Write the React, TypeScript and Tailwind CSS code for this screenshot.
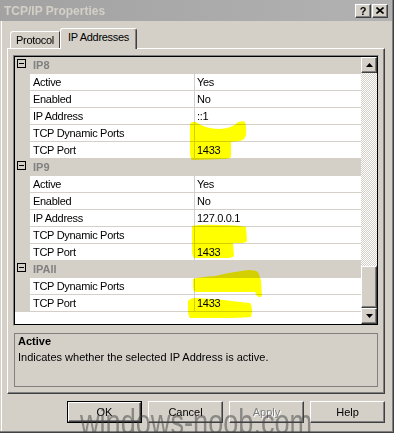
// TCP/IP Properties dialog (SQL Server Configuration Manager), "IP Addresses"
// tab with the property grid, the description pane and the dialog buttons.

const sans = "font-['Liberation_Sans',Arial,sans-serif]"

type Row = { label: string; value?: string }
type Group = { name: string; rows: Row[] }

const groups: Group[] = [
  {
    name: 'IP8',
    rows: [
      { label: 'Active', value: 'Yes' },
      { label: 'Enabled', value: 'No' },
      { label: 'IP Address', value: '::1' },
      { label: 'TCP Dynamic Ports' },
      { label: 'TCP Port', value: '1433' },
    ],
  },
  {
    name: 'IP9',
    rows: [
      { label: 'Active', value: 'Yes' },
      { label: 'Enabled', value: 'No' },
      { label: 'IP Address', value: '127.0.0.1' },
      { label: 'TCP Dynamic Ports' },
      { label: 'TCP Port', value: '1433' },
    ],
  },
  {
    name: 'IPAll',
    rows: [{ label: 'TCP Dynamic Ports' }, { label: 'TCP Port', value: '1433' }],
  },
]

// Win2000 raised bevel: white/#404040 outside, #808080 inner shadow
const raised =
  'border border-t-white border-l-white border-r-[#404040] border-b-[#404040] shadow-[inset_-1px_-1px_0_#808080] bg-[#d4d0c8]'

function Arrow({ down }: { down?: boolean }) {
  return (
    <svg width="7" height="4" viewBox="0 0 7 4">
      <path d={down ? 'M0 0h7L3.5 4z' : 'M3.5 0L7 4H0z'} fill="#000" />
    </svg>
  )
}

function TitleBar() {
  return (
    <div className="flex h-[21px] items-center justify-between bg-linear-to-r from-[#a2a2a2] to-[#b2b2b2] pl-[4px] pr-[4px]">
      <span className="text-[12px] font-bold leading-[14px] text-[#d4d0c8]">TCP/IP Properties</span>
      <div className="flex gap-[1px]">
        <div className={`flex h-[14px] w-[16px] items-center justify-center text-[11px] font-bold leading-[12px] ${raised}`}>
          ?
        </div>
        <div className={`flex h-[14px] w-[16px] items-center justify-center ${raised}`}>
          <svg width="8" height="7" viewBox="0 0 8 7">
            <path d="M0.5 0.5L7.5 6.5M7.5 0.5L0.5 6.5" stroke="#000" strokeWidth="1.6" />
          </svg>
        </div>
      </div>
    </div>
  )
}

function Tabs() {
  return (
    <div className="mt-[6px] flex h-[21px] items-end pl-[8px] tracking-[-0.3px]">
      <div className="flex h-[17px] w-[50px] items-center justify-center rounded-tl-[3px] border-t border-l border-white border-r border-r-[#404040] leading-[13px]">
        Protocol
      </div>
      <div className="relative z-10 -mb-px flex h-[21px] w-[77px] justify-center rounded-t-[3px] border-t border-l border-white border-r border-r-[#404040] bg-[#d4d0c8] pt-[2px] leading-[13px] shadow-[inset_-1px_0_0_#808080]">
        IP Addresses
      </div>
    </div>
  )
}

function GroupHeader({ name }: { name: string }) {
  return (
    <div className="flex h-[17px] bg-[#d4d0c8]">
      <div className="w-[15px] pl-[2px] pt-[2px]">
        <div className="flex h-[9px] w-[9px] items-center justify-center border border-black">
          <div className="h-px w-[5px] bg-black" />
        </div>
      </div>
      <span className="pl-[3px] font-bold leading-[17px] text-[#808080]">{name}</span>
    </div>
  )
}

function PropRow({ label, value }: Row) {
  return (
    <div className="flex h-[17px]">
      <div className="w-[15px] bg-[#d4d0c8]" />
      <div className="flex flex-1 border-b border-[#d4d0c8] bg-white leading-[16px] tracking-[-0.3px]">
        <span className="relative w-[164px] pl-[3px]">{label}</span>
        <span className="relative flex-1 border-l border-[#d4d0c8] pl-[2px]">{value}</span>
      </div>
    </div>
  )
}

function ScrollBar() {
  return (
    <div className="flex w-[16px] flex-col">
      <div className={`flex h-[16px] items-center justify-center ${raised}`}>
        <Arrow />
      </div>
      <div className="flex-1 bg-[image:repeating-conic-gradient(#d4d0c8_0%_25%,#ffffff_0%_50%)] bg-[length:2px_2px]" />
      <div className={`h-[42px] ${raised}`} />
      <div className={`flex h-[16px] items-center justify-center ${raised}`}>
        <Arrow down />
      </div>
    </div>
  )
}

function PropertyGrid() {
  return (
    <div className="h-[271px] w-[366px] border border-t-[#808080] border-l-[#808080] border-r-[#d4d0c8] border-b-[#d4d0c8]">
      <div className="flex h-full border border-black">
        <div className="flex w-[346px] flex-col">
          {groups.map(g => (
            <div key={g.name}>
              <GroupHeader name={g.name} />
              {g.rows.map(r => (
                <PropRow key={r.label} {...r} />
              ))}
            </div>
          ))}
          <div className="flex-1 bg-white" />
        </div>
        <ScrollBar />
      </div>
    </div>
  )
}

function Panel() {
  return (
    <div className="ml-[5px] h-[346px] w-[378px] border-t border-l border-t-white border-l-white border-r border-b border-r-[#404040] border-b-[#404040] pl-[5px] pt-[6px] shadow-[inset_-1px_-1px_0_#808080]">
      <PropertyGrid />
      <div className="ml-px mt-[7px] h-[54px] w-[364px] border border-[#808080] pl-[3px]">
        <p className="font-bold leading-[14px]">Active</p>
        <p className="mt-[2px] leading-[14px]">Indicates whether the selected IP Address is active.</p>
      </div>
    </div>
  )
}

function DialogButton({ label, primary, disabled }: { label: string; primary?: boolean; disabled?: boolean }) {
  const face = (
    <div
      className={`flex h-full w-full items-center justify-center leading-[13px] ${raised} ${
        disabled ? 'text-[#808080] [text-shadow:1px_1px_0_#fff]' : ''
      }`}
    >
      {label}
    </div>
  )
  return primary ? (
    <div className="h-[22px] w-[75px] border border-black">{face}</div>
  ) : (
    <div className="h-[22px] w-[75px]">{face}</div>
  )
}

function Buttons() {
  return (
    <div className="mt-[7px] flex gap-[6px] pl-[65px]">
      <DialogButton label="OK" primary />
      <DialogButton label="Cancel" />
      <DialogButton label="Apply" disabled />
      <DialogButton label="Help" />
    </div>
  )
}

// Yellow marker strokes someone painted over the port values
function Highlights() {
  return (
    <svg
      className="pointer-events-none absolute left-0 top-0 mix-blend-multiply"
      width="394"
      height="433"
      viewBox="0 0 394 433"
    >
      <g fill="#ffff00">
        <path d="M190 124Q192 121 196 122Q205 129 220 129Q233 128 238 122L244 121Q247 124 246 135Q245 140 240 141L231 142L231 157Q229 159 224 159L192 160Q190 158 190 150Z" />
        <path d="M192 226Q200 224 220 225Q240 225 246 227L247 241Q246 243 240 243L233 243L234 256Q232 258 226 258L194 258Q192 256 192 250Z" />
        <path d="M193 279Q200 277 215 276Q232 272 248 270Q256 270 258 272L261 280L262 296Q260 298 257 296L255 292L195 292Q193 291 193 286Z" />
        <path d="M188 301Q190 298 196 298Q220 299 240 302L250 303Q252 305 252 312L251 317Q240 318 220 318L190 318Q188 316 188 310Z" />
      </g>
    </svg>
  )
}

function Watermark() {
  return (
    <div className="pointer-events-none absolute left-[80px] top-[404px] origin-left scale-x-[0.775] whitespace-nowrap text-[35px] leading-[35px] text-[#404040]/50">
      windows-noob.com
    </div>
  )
}

export default function App() {
  return (
    <div className={`relative h-[433px] w-[394px] overflow-hidden bg-[#d4d0c8] text-[11px] text-black ${sans}`}>
      <div className="flex h-full flex-col border-r border-b border-[#404040]">
        <div className="flex h-full flex-col border-r border-b border-[#808080]">
          <TitleBar />
          <div className="ml-px flex flex-1 flex-col border-l border-white">
            <Tabs />
            <Panel />
            <Buttons />
          </div>
        </div>
      </div>
      <Highlights />
      <Watermark />
    </div>
  )
}
